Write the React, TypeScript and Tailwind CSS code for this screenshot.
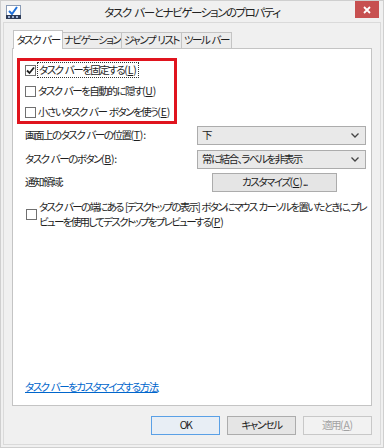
import { ReactNode } from 'react';

const font = "font-['Noto_Sans_CJK_JP',sans-serif] [font-feature-settings:'palt']";

// access key in parentheses, e.g. (L)
function K({ k }: { k: string }) {
  return (
    <span className="tracking-[-0.2px]">
      (<u>{k}</u>)
    </span>
  );
}

function AppIcon() {
  return (
    <svg width="15" height="14" viewBox="0 0 15 14">
      <rect x="0.5" y="0.5" width="14" height="13" fill="#ffffff" stroke="#8a9bb5" />
      <path d="M3 6 L6 9 L11 2" fill="none" stroke="#1e6fd9" strokeWidth="2" />
      <rect x="0" y="10" width="15" height="4" fill="#2d3b58" />
      <rect x="2" y="11" width="2" height="2" fill="#9fb3d6" />
      <rect x="6" y="11" width="2" height="2" fill="#9fb3d6" />
      <rect x="10" y="11" width="2" height="2" fill="#9fb3d6" />
    </svg>
  );
}

function CheckBox({ checked }: { checked?: boolean }) {
  return (
    <div className="w-[11px] h-[11px] border border-[#707070] bg-white flex items-center justify-center shrink-0">
      {checked && (
        <svg width="9" height="9" viewBox="0 0 9 9">
          <path d="M1 4.5 L3.5 7 L8 1.5" fill="none" stroke="#1f1f1f" strokeWidth="1.8" />
        </svg>
      )}
    </div>
  );
}

function Chevron() {
  return (
    <svg width="8" height="5" viewBox="0 0 8 5">
      <path d="M0.5 0.5 L4 4 L7.5 0.5" fill="none" stroke="#444" strokeWidth="1.3" />
    </svg>
  );
}

function Select({ value }: { value: string }) {
  return (
    <div className="w-[169px] h-[19px] border border-[#acacac] bg-[#e9e9e9] flex items-center justify-between pl-[4px] pr-[6px]">
      <span className="leading-none">{value}</span>
      <Chevron />
    </div>
  );
}

function Button({ children, primary, disabled }: { children: ReactNode; primary?: boolean; disabled?: boolean }) {
  return (
    <div
      className={
        'w-[69px] h-[19px] flex items-center justify-center leading-none border ' +
        (primary
          ? 'border-[#5aa0e6] bg-[#e8eef5] text-[#1e1e1e]'
          : disabled
          ? 'border-[#c8c8c8] bg-[#f2f2f2] text-[#a2a2a2]'
          : 'border-[#acacac] bg-[#e5e5e5] text-[#1e1e1e]')
      }
    >
      {children}
    </div>
  );
}

export default function App() {
  const tabs = [
    { label: 'ナビゲーション', w: 'w-[60px]' },
    { label: 'ジャンプ リスト', w: 'w-[61px]' },
    { label: 'ツール バー', w: 'w-[51px]' },
  ];

  return (
    <div
      className={`w-[384px] h-[448px] bg-[#f0f0f0] border border-[#cfcfcf] flex flex-col text-[#1e1e1e] text-[10.5px] tracking-[-1.5px] [word-spacing:1.5px] ${font}`}
    >
      {/* title bar */}
      <div className="h-[22px] grid grid-cols-[1fr_auto_1fr] items-start">
        <div className="pl-[5px] pt-[4px]">
          <AppIcon />
        </div>
        <div className="pt-[4px] text-[11.5px] leading-[15px] tracking-[-1.4px] [word-spacing:2.5px] text-[#222] whitespace-nowrap">
          タスク バーとナビゲーションのプロパティ
        </div>
        <div className="flex justify-end pr-[4px]">
          <div className="w-[24px] h-[17px] bg-[#c75050] flex items-center justify-center">
            <svg width="8" height="8" viewBox="0 0 8 8">
              <path d="M1 1 L7 7 M7 1 L1 7" stroke="#ffffff" strokeWidth="1.8" />
            </svg>
          </div>
        </div>
      </div>

      {/* client area */}
      <div className="mx-[2px] mb-[2px] flex-1 border border-[#dadada] px-[8px] pt-[7px] pb-[9px] flex flex-col">
        <div className="flex items-end h-[18px] pl-[1px] whitespace-nowrap">
          <div className="w-[50px] h-[19px] -mb-px relative z-10 bg-white border border-b-0 border-[#c4c4c4] flex items-center justify-center leading-none">
            タスク バー
          </div>
          {tabs.map((t) => (
            <div
              key={t.label}
              className={`${t.w} h-[16px] -ml-px border border-b-0 border-[#c4c4c4] bg-[#ececec] flex items-center justify-center leading-none`}
            >
              {t.label}
            </div>
          ))}
        </div>

        {/* panel */}
        <div className="h-[358px] bg-white border border-[#c4c4c4] flex flex-col">
          <div className="ml-[4px] mt-[9px] w-[160px] h-[66px] border-[3px] border-[#e0141e] flex flex-col gap-[3px] pl-[5px] whitespace-nowrap">
            <div className="h-[18px] flex items-center gap-[1px]">
              <CheckBox checked />
              <span className="leading-[14px] border border-dotted border-[#333] px-[1px]">
                タスク バーを固定する<K k="L" />
              </span>
            </div>
            <div className="h-[18px] flex items-center gap-[2px]">
              <CheckBox />
              <span className="leading-none">
                タスク バーを自動的に隠す<K k="U" />
              </span>
            </div>
            <div className="h-[18px] flex items-center gap-[2px]">
              <CheckBox />
              <span className="leading-none">
                小さいタスク バー ボタンを使う<K k="E" />
              </span>
            </div>
          </div>

          <div className="pl-[12px] pr-[5px] mt-[2px] flex flex-col leading-none whitespace-nowrap">
            <div className="h-[19px] flex items-center justify-between">
              <span>
                画面上のタスク バーの位置<K k="T" />:
              </span>
              <Select value="下" />
            </div>
            <div className="h-[19px] mt-[5px] flex items-center justify-between">
              <span>
                タスク バーのボタン<K k="B" />:
              </span>
              <Select value="常に結合、ラベルを非表示" />
            </div>
            <div className="h-[19px] mt-[4px] flex items-center">
              <span className="w-[187px]">通知領域:</span>
              <div className="w-[125px] h-[19px] border border-[#acacac] bg-[#e5e5e5] flex items-center justify-center">
                カスタマイズ<K k="C" />...
              </div>
            </div>
          </div>

          <div className="pl-[13px] pr-[8px] mt-[7px] flex items-center gap-[2px] whitespace-nowrap">
            <CheckBox />
            <span className="leading-[15px] tracking-[-1.7px] [word-spacing:1.5px]">
              タスク バーの端にある [デスクトップの表示] ボタンにマウス カーソルを置いたときに、プレ
              <br />
              ビューを使用してデスクトップをプレビューする<K k="P" />
            </span>
          </div>

          <div className="mt-auto mb-[10px] pl-[12px]">
            <span className="leading-[15px] text-[#0066cc] underline">タスク バーをカスタマイズする方法</span>
          </div>
        </div>

        <div className="mt-[10px] flex justify-end gap-[7px]">
          <Button primary>OK</Button>
          <Button>キャンセル</Button>
          <Button disabled>
            適用<K k="A" />
          </Button>
        </div>
      </div>
    </div>
  );
}
